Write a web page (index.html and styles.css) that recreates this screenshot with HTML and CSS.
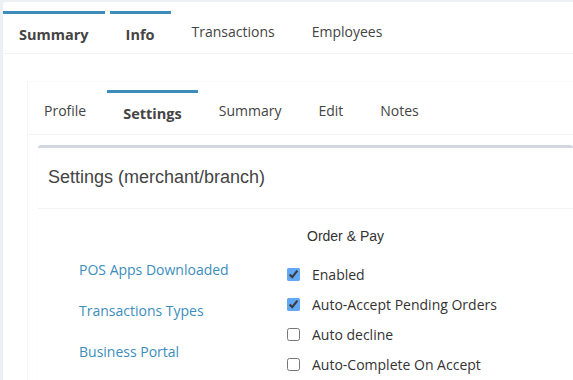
FILE: index.html
```html
<!DOCTYPE html>
<html lang="en">
<head>
    <meta charset="UTF-8">
    <meta name="viewport" content="width=device-width, initial-scale=1.0">
    <title>Merchant - Settings</title>
    <link rel="stylesheet" href="styles.css">
</head>
<body>
    <div class="page">
        <!-- Top level tabs -->
        <ul class="tabs">
            <li class="tab active">Summary</li>
            <li class="tab active">Info</li>
            <li class="tab">Transactions</li>
            <li class="tab">Employees</li>
        </ul>

        <div class="inner">
            <!-- Info sub tabs -->
            <ul class="tabs sub-tabs">
                <li class="tab">Profile</li>
                <li class="tab active">Settings</li>
                <li class="tab">Summary</li>
                <li class="tab">Edit</li>
                <li class="tab">Notes</li>
            </ul>

            <div class="inner-content">
                <div class="box">
                    <div class="box-header">
                        <h3 class="box-title">Settings (merchant/branch)</h3>
                    </div>
                    <div class="box-body">
                        <div class="side-links">
                            <a href="#">POS Apps Downloaded</a>
                            <a href="#">Transactions Types</a>
                            <a href="#">Business Portal</a>
                        </div>
                        <div class="options">
                            <div class="options-title">Order &amp; Pay</div>
                            <label class="option"><input type="checkbox" checked> Enabled</label>
                            <label class="option"><input type="checkbox" checked> Auto-Accept Pending Orders</label>
                            <label class="option"><input type="checkbox"> Auto decline</label>
                            <label class="option"><input type="checkbox"> Auto-Complete On Accept</label>
                        </div>
                    </div>
                </div>
            </div>
        </div>
    </div>
</body>
</html>
```

FILE: styles.css
```css
html, body {
    height: 100%;
}
body {
    font-family: 'Open Sans', sans-serif;
    font-size: 14px;
    background-color: #ecf0f5;
    margin: 0;
    padding: 0;
    color: #333;
    overflow: hidden;
}
.page {
    margin: 2px 0 0 3px;
    background-color: #fff;
    border-top-left-radius: 3px;
    height: 100%;
}
.tabs {
    list-style: none;
    margin: 0;
    padding: 9px 0 0 0;
    display: flex;
    gap: 5px;
    border-bottom: 1px solid #f4f4f4;
}
.tab {
    box-sizing: border-box;
    height: 42px;
    padding: 8px 16px 0;
    border-top: 3px solid transparent;
    line-height: 20px;
    color: #444;
    white-space: nowrap;
}
.tab.active {
    border-top-color: #3c8dbc;
    font-weight: 700;
    font-size: 14.5px;
    padding-top: 11px;
}
.inner {
    margin: 27px 0 0 24px;
    border-left: 1px solid #f6f6f6;
    border-top: 1px solid #fafafa;
}
.sub-tabs {
    padding-top: 8px;
}
.sub-tabs .tab {
    height: 44px;
    padding-top: 8px;
}
.sub-tabs .tab.active {
    padding-top: 11px;
}
.inner-content {
    padding: 10px 0 0 10px;
}
.box {
    background-color: #fff;
    border-top: 3px solid #d2d6de;
    border-radius: 3px;
    box-shadow: 0 1px 1px rgba(0, 0, 0, 0.1);
}
.box-header {
    padding: 20px 10px 20px;
    border-bottom: 1px solid #f4f4f4;
}
.box-title {
    margin: 0;
    font-family: 'Liberation Sans', Arial, sans-serif;
    font-size: 18px;
    font-weight: 400;
    line-height: 19.8px;
    color: #444;
}
.box-body {
    display: flex;
    padding: 17px 0 20px 41px;
}
.side-links {
    width: 208px;
    padding-top: 34px;
    display: flex;
    flex-direction: column;
    gap: 21px;
}
.side-links a {
    color: #3c8dbc;
    text-decoration: none;
    line-height: 20px;
}
.options-title {
    font-family: 'Liberation Sans', Arial, sans-serif;
    font-size: 14px;
    line-height: 20px;
    padding-left: 20px;
    margin-bottom: 19px;
    color: #333;
}
.option {
    display: flex;
    align-items: center;
    gap: 12px;
    line-height: 20px;
    margin-bottom: 10px;
    color: #333;
}
.option input {
    margin: 0;
    width: 13px;
    height: 13px;
    accent-color: #62a8f4;
}
```
